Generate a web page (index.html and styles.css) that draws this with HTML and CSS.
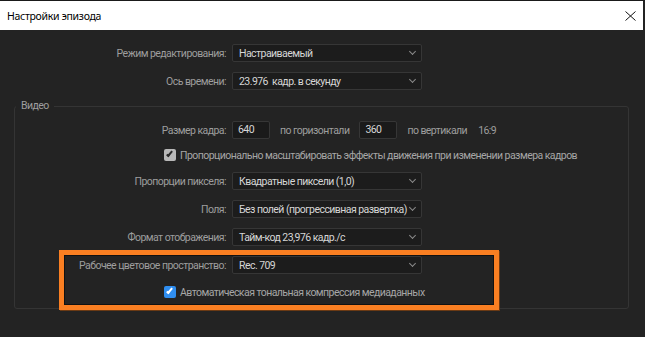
FILE: index.html
```html
<html lang="ru">

<head>
	<title>Настройки эпизода</title>
	<meta charset="utf-8">
	<meta name="viewport" content="width=device-width, initial-scale=1.0">
	<link rel="stylesheet" href="styles.css">
</head>

<body>
	<div class="window">
		<div class="titlebar">
			<span class="title">Настройки эпизода</span>
			<svg class="close" width="11" height="10" viewBox="0 0 11 10">
				<path d="M0.5 0.5 L10.5 9.5 M10.5 0.5 L0.5 9.5" stroke="#111" stroke-width="1" fill="none"/>
			</svg>
		</div>

		<div class="content">
			<div class="row top">
				<div class="label">Режим редактирования:</div>
				<div class="select"><span>Настраиваемый</span><i class="chev"></i></div>
			</div>
			<div class="row top">
				<div class="label">Ось времени:</div>
				<div class="select"><span>23.976&nbsp; кадр. в секунду</span><i class="chev"></i></div>
			</div>

			<fieldset class="group">
				<legend>Видео</legend>

				<div class="row inner">
					<div class="label">Размер кадра:</div>
					<div class="sizes">
						<div class="input">640</div>
						<span>по горизонтали</span>
						<div class="input">360</div>
						<span>по вертикали</span>
						<span class="ratio">16:9</span>
					</div>
				</div>

				<div class="check-row inner">
					<span class="check grey"></span>
					<span>Пропорционально масштабировать эффекты движения при изменении размера кадров</span>
				</div>

				<div class="row inner">
					<div class="label">Пропорции пикселя:</div>
					<div class="select"><span>Квадратные пиксели (1,0)</span><i class="chev"></i></div>
				</div>
				<div class="row inner">
					<div class="label">Поля:</div>
					<div class="select"><span>Без полей (прогрессивная развертка)</span><i class="chev"></i></div>
				</div>
				<div class="row inner">
					<div class="label">Формат отображения:</div>
					<div class="select"><span>Тайм-код 23,976 кадр./с</span><i class="chev"></i></div>
				</div>

				<div class="highlight">
					<div class="row boxed">
						<div class="label">Рабочее цветовое пространство:</div>
						<div class="select"><span>Rec. 709</span><i class="chev"></i></div>
					</div>
					<div class="check-row boxed">
						<span class="check blue"></span>
						<span>Автоматическая тональная компрессия медиаданных</span>
					</div>
				</div>
			</fieldset>
		</div>
	</div>
</body>
</html>
```

FILE: styles.css
```css
html, body {
	padding: 0;
	margin: 0;
	background: #232323;
	color: #9e9e9e;
	font-family: Roboto, "Noto Sans", sans-serif;
	font-size: 10.5px;
	letter-spacing: -0.55px;
}

*, *:before, *:after {
	box-sizing: border-box;
}

.window {
	height: 337px;
	border-top: 1px solid #1a1a1a;
}

.titlebar {
	height: 29px;
	margin-right: 2px;
	background: #fff;
	display: flex;
	align-items: center;
	justify-content: space-between;
	padding: 0 7px 0 7px;
}

.title {
	color: #000;
	font-family: "Noto Sans", sans-serif;
	font-size: 10.5px;
	letter-spacing: -0.3px;
	padding-top: 1px;
}

.close {
	display: block;
}

.content {
	padding-top: 14px;
}

/* label + control rows */
.row {
	display: grid;
	grid-template-columns: 226px auto;
	column-gap: 6px;
	align-items: center;
	height: 18px;
}

.row.top + .row.top {
	margin-top: 10px;
}

.row.inner {
	grid-template-columns: 211px auto;
}

.row.boxed {
	grid-template-columns: 161px auto;
}

.label {
	text-align: right;
	white-space: nowrap;
}

.select {
	width: 190px;
	height: 18px;
	background: #1c1c1c;
	border: 1px solid #363636;
	border-radius: 2px;
	display: flex;
	align-items: center;
	justify-content: space-between;
	padding: 0 4px 0 6px;
	color: #d6d6d6;
	white-space: nowrap;
}

.chev {
	width: 5px;
	height: 5px;
	border-right: 1px solid #8a8a8a;
	border-bottom: 1px solid #8a8a8a;
	transform: rotate(45deg);
	margin: 0 2px 3px 0;
}

/* video group */
.group {
	margin: 9px 16px 0 14px;
	padding: 8px 0 0 0;
	border: 1px solid #343434;
	border-radius: 3px;
	height: 210px;
}

.group legend {
	margin-left: 1px;
	padding: 0 5px;
	line-height: 14px;
	color: #9e9e9e;
}

.sizes {
	display: flex;
	align-items: center;
	gap: 10px;
	white-space: nowrap;
}

.input {
	width: 38px;
	height: 18px;
	background: #1a1a1a;
	border: 1px solid #363636;
	border-radius: 2px;
	color: #d6d6d6;
	padding-left: 5px;
	line-height: 16px;
}

.sizes .ratio {
	margin-left: 1px;
}

.check-row {
	display: flex;
	align-items: center;
	gap: 4px;
	height: 12px;
	white-space: nowrap;
	color: #a6a6a6;
}

.check-row.inner {
	margin: 10px 0 11px 149px;
}

.row.inner + .row.inner {
	margin-top: 10px;
}

.check {
	width: 12px;
	height: 12px;
	border-radius: 2px;
	position: relative;
	flex: none;
}

.check:after {
	content: "";
	position: absolute;
	left: 4px;
	top: 1px;
	width: 3px;
	height: 7px;
	border-right: 2px solid;
	border-bottom: 2px solid;
	transform: rotate(40deg);
}

.check.grey {
	background: #b8b8b8;
}

.check.grey:after {
	border-color: #2a2a2a;
}

.check.blue {
	background: #2f8ef0;
}

.check.blue:after {
	border-color: #fff;
}

/* orange annotation frame */
.highlight {
	margin: 4px 0 0 44px;
	width: 440px;
	border: 5px solid #fa7f22;
	box-shadow: inset 0 0 0 1px #111, 1px 1px 0 #6b3a14;
	padding: 1px 1px 7px 1px;
}

.check-row.boxed {
	margin: 12px 0 0 99px;
}
```
